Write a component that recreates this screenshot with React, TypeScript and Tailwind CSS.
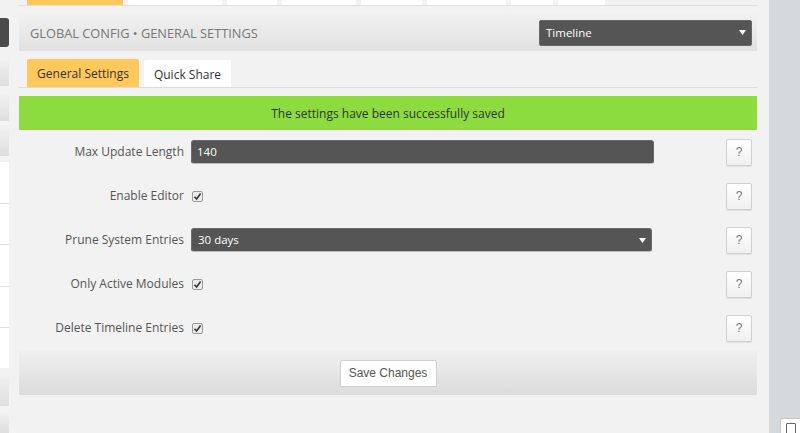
import React from "react";

function Arrow() {
  return (
    <svg width="7" height="5" viewBox="0 0 7 5" className="shrink-0">
      <path d="M0 0 L7 0 L3.5 5 Z" fill="#fff" />
    </svg>
  );
}

function Check() {
  return (
    <div className="w-[11px] h-[11px] border border-[#9a9a9a] bg-[#ececec] rounded-[2px] flex items-center justify-center">
      <svg width="9" height="9" viewBox="0 0 9 9">
        <path d="M1.5 4.8 L3.6 7 L7.6 1.6" stroke="#333" strokeWidth="1.6" fill="none" />
      </svg>
    </div>
  );
}

function Help() {
  return (
    <div className="ml-auto mr-[5px] w-[26px] h-[27px] bg-gradient-to-b from-[#ffffff] to-[#f0f0f0] border border-[#d0d0d0] rounded-[2px] flex items-center justify-center text-[12px] text-[#777] font-['Liberation_Sans',sans-serif] shadow-[0_1px_0_#e0e0e0]">
      ?
    </div>
  );
}

function Row({ label, children }: { label: string; children: React.ReactNode }) {
  return (
    <div className="h-[44px] flex items-center">
      <div className="w-[165px] text-right text-[12px] text-[#555]">{label}</div>
      <div className="ml-[7px] flex items-center">{children}</div>
      <Help />
    </div>
  );
}

export default function App() {
  const topTabs = [
    { w: "w-[94px]" },
    { w: "w-[50px]" },
    { w: "w-[74px]" },
    { w: "w-[61px]" },
    { w: "w-[79px]" },
    { w: "w-[42px]" },
    { w: "w-[47px]" },
  ];
  return (
    <div className="w-[800px] h-[433px] bg-[#f2f2f2] flex overflow-hidden font-['Open_Sans',sans-serif]">
      {/* left strip */}
      <div className="w-[9px] shrink-0 flex flex-col">
        <div className="h-[18px]" />
        <div className="h-[29px] bg-[#4a4a4a] rounded-r-[3px]" />
        <div className="h-[13px]" />
        <div className="h-[26px] bg-gradient-to-b from-[#f0f0f0] to-[#dedede]" />
        <div className="h-[9px]" />
        <div className="h-[27px] bg-gradient-to-b from-[#f0f0f0] to-[#dedede]" />
        <div className="h-[8px]" />
        <div className="h-[27px] bg-gradient-to-b from-[#f0f0f0] to-[#dedede]" />
        <div className="h-[6px]" />
        <div className="h-[42px] bg-white border-b border-[#e2e2e2]" />
        <div className="h-[41px] bg-white border-b border-[#e2e2e2]" />
        <div className="h-[42px] bg-white border-b border-[#e2e2e2]" />
        <div className="h-[42px] bg-white border-b border-[#e2e2e2]" />
        <div className="h-[40px] bg-white" />
        <div className="h-[9px]" />
        <div className="h-[29px] bg-gradient-to-b from-[#f0f0f0] to-[#dedede]" />
        <div className="h-[7px]" />
        <div className="h-[20px] bg-gradient-to-b from-[#f0f0f0] to-[#dedede]" />
      </div>

      {/* main */}
      <div className="flex-1 flex flex-col pl-[10px] pr-[12px]">
        <div className="h-[6px] border-b border-[#e0e0e0] flex gap-[5px] pl-[8px]">
          <div className="w-[96px] h-[5px] bg-[#ffc85a]" />
          {topTabs.map((t, i) => (
            <div key={i} className={`${t.w} h-[5px] bg-white`} />
          ))}
        </div>

        <div className="mt-[8px] h-[37px] bg-gradient-to-b from-[#f1f1f1] to-[#e1e1e1] flex items-center justify-between pl-[11px] pr-[5px]">
          <div className="text-[12.8px] text-[#777] uppercase pt-[2px]">GLOBAL CONFIG • GENERAL SETTINGS</div>
          <div className="w-[213px] h-[26px] bg-[#555] border border-[#6a6a6a] rounded-[2px] flex items-center justify-between pl-[6px] pr-[5px] text-[11.5px] text-white">
            <span>Timeline</span>
            <Arrow />
          </div>
        </div>

        <div className="h-[37px] border-b border-[#dcdcdc] flex items-end gap-[5px] pl-[8px]">
          <div className="w-[112px] h-[28px] bg-[#ffc85a] flex items-center justify-center pt-[2px] text-[12px] text-[#333] rounded-t-[2px]">
            General Settings
          </div>
          <div className="w-[87px] h-[27px] bg-white flex items-center justify-center pt-[2px] text-[12px] text-[#333] rounded-t-[2px]">
            Quick Share
          </div>
        </div>

        <div className="mt-[8px] h-[34px] bg-[#8cdb3f] flex items-center justify-center pt-[1px] text-[12px] text-[#333]">
          The settings have been successfully saved
        </div>

        <Row label="Max Update Length">
          <div className="w-[463px] h-[24px] bg-[#555] border border-[#6a6a6a] border-b-[#bbb] rounded-[3px] flex items-center pl-[5px] text-[11.5px] text-white">
            140
          </div>
        </Row>
        <Row label="Enable Editor">
          <div className="pl-[1px]"><Check /></div>
        </Row>
        <Row label="Prune System Entries">
          <div className="w-[461px] h-[24px] bg-[#555] border border-[#6a6a6a] border-b-[#bbb] rounded-[3px] flex items-center justify-between pl-[6px] pr-[5px] text-[11.5px] text-white">
            <span>30 days</span>
            <Arrow />
          </div>
        </Row>
        <Row label="Only Active Modules">
          <div className="pl-[1px]"><Check /></div>
        </Row>
        <Row label="Delete Timeline Entries">
          <div className="pl-[1px]"><Check /></div>
        </Row>

        <div className="mt-[1px] h-[44px] bg-gradient-to-b from-[#efefef] to-[#dcdcdc] flex items-center justify-center">
          <div className="w-[97px] h-[27px] bg-white border border-[#cfcfcf] rounded-[2px] flex items-center justify-center text-[12px] text-[#555] font-['Liberation_Sans',sans-serif]">
            Save Changes
          </div>
        </div>
      </div>

      {/* right sidebar */}
      <div className="w-[31px] shrink-0 bg-[#d5d9dc] flex flex-col justify-end">
        <div className="ml-[11px] h-[15px] bg-white border-l border-t border-[#c8c8c8] rounded-tl-[3px] flex pl-[5px] pt-[4px]">
          <div className="w-[10px] h-[11px] border border-[#666] rounded-[1px]" />
        </div>
      </div>
    </div>
  );
}
